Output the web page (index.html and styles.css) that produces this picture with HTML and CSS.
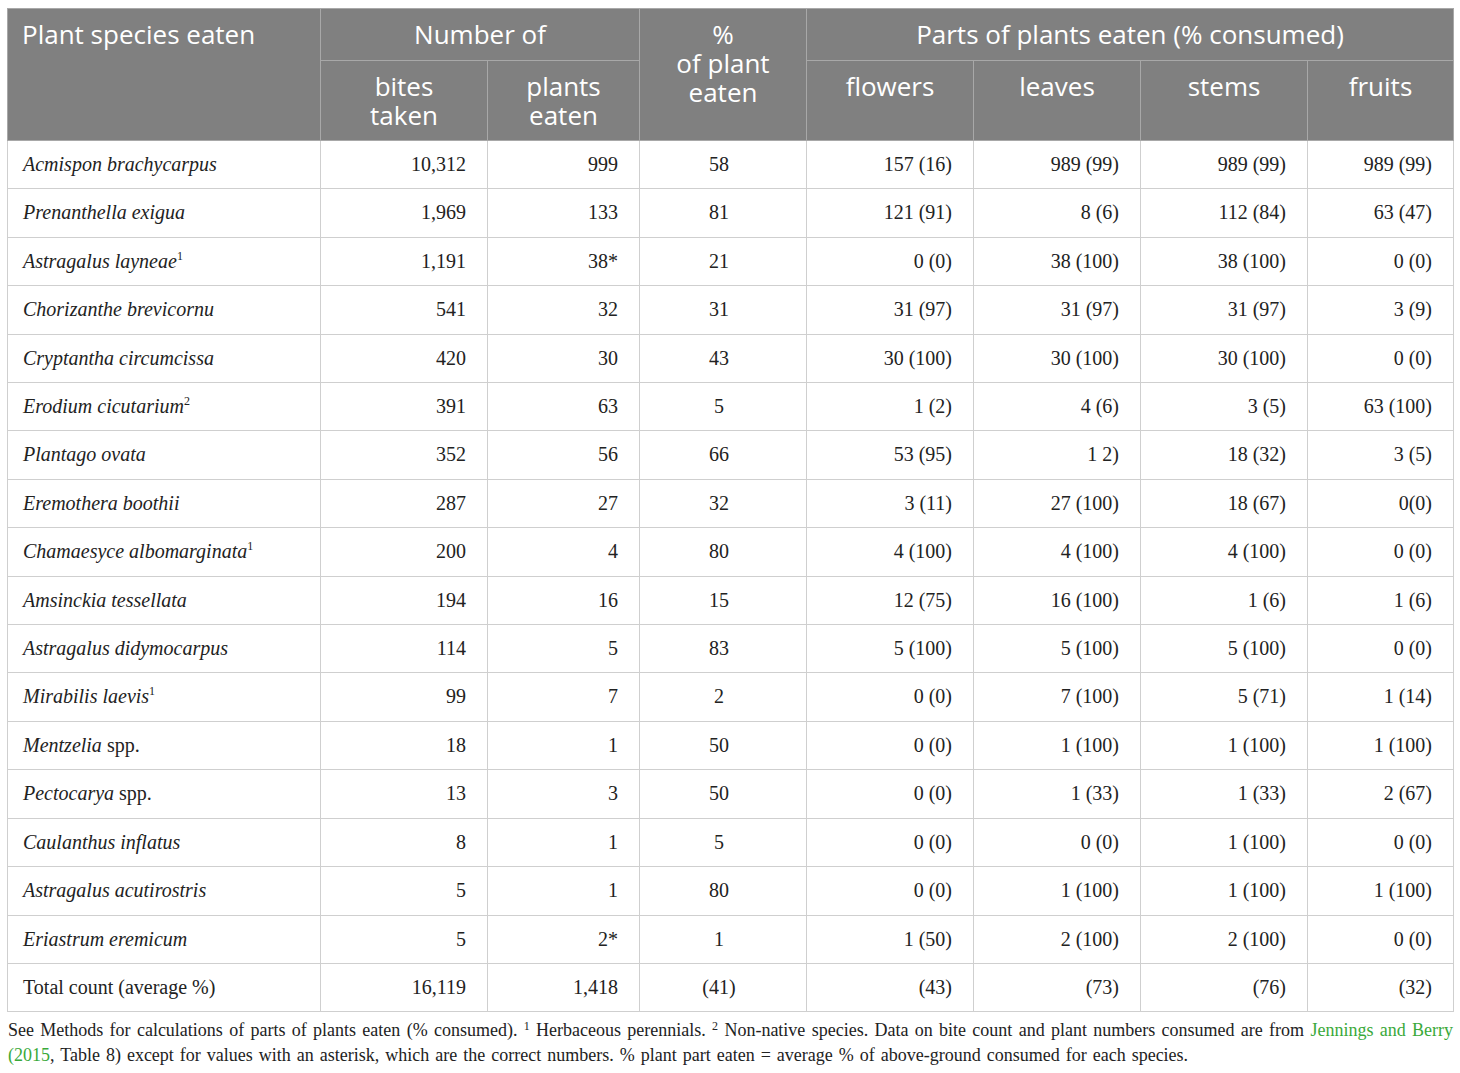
FILE: index.html
```html
<!DOCTYPE html>
<html lang="en">
<head>
    <meta charset="UTF-8">
    <meta name="viewport" content="width=device-width, initial-scale=1.0">
    <title>Plant species eaten</title>
    <link rel="stylesheet" href="styles.css">
</head>
<body>
    <div class="page">
        <table class="data-table">
            <colgroup>
                <col class="c-name">
                <col class="c-bites">
                <col class="c-plants">
                <col class="c-pct">
                <col class="c-part">
                <col class="c-part">
                <col class="c-part">
                <col class="c-fruit">
            </colgroup>
            <thead>
                <tr class="head-top">
                    <th rowspan="2" class="left">Plant species eaten</th>
                    <th colspan="2">Number of</th>
                    <th rowspan="2">%<br>of plant<br>eaten</th>
                    <th colspan="4">Parts of plants eaten (% consumed)</th>
                </tr>
                <tr class="head-sub">
                    <th>bites<br>taken</th>
                    <th>plants<br>eaten</th>
                    <th>flowers</th>
                    <th>leaves</th>
                    <th>stems</th>
                    <th>fruits</th>
                </tr>
            </thead>
            <tbody>
                <tr><td class="sp">Acmispon brachycarpus</td><td>10,312</td><td>999</td><td class="mid">58</td><td>157 (16)</td><td>989 (99)</td><td>989 (99)</td><td>989 (99)</td></tr>
                <tr><td class="sp">Prenanthella exigua</td><td>1,969</td><td>133</td><td class="mid">81</td><td>121 (91)</td><td>8 (6)</td><td>112 (84)</td><td>63 (47)</td></tr>
                <tr><td class="sp">Astragalus layneae<sup>1</sup></td><td>1,191</td><td>38*</td><td class="mid">21</td><td>0 (0)</td><td>38 (100)</td><td>38 (100)</td><td>0 (0)</td></tr>
                <tr><td class="sp">Chorizanthe brevicornu</td><td>541</td><td>32</td><td class="mid">31</td><td>31 (97)</td><td>31 (97)</td><td>31 (97)</td><td>3 (9)</td></tr>
                <tr><td class="sp">Cryptantha circumcissa</td><td>420</td><td>30</td><td class="mid">43</td><td>30 (100)</td><td>30 (100)</td><td>30 (100)</td><td>0 (0)</td></tr>
                <tr><td class="sp">Erodium cicutarium<sup>2</sup></td><td>391</td><td>63</td><td class="mid">5</td><td>1 (2)</td><td>4 (6)</td><td>3 (5)</td><td>63 (100)</td></tr>
                <tr><td class="sp">Plantago ovata</td><td>352</td><td>56</td><td class="mid">66</td><td>53 (95)</td><td>1 2)</td><td>18 (32)</td><td>3 (5)</td></tr>
                <tr><td class="sp">Eremothera boothii</td><td>287</td><td>27</td><td class="mid">32</td><td>3 (11)</td><td>27 (100)</td><td>18 (67)</td><td>0(0)</td></tr>
                <tr><td class="sp">Chamaesyce albomarginata<sup>1</sup></td><td>200</td><td>4</td><td class="mid">80</td><td>4 (100)</td><td>4 (100)</td><td>4 (100)</td><td>0 (0)</td></tr>
                <tr><td class="sp">Amsinckia tessellata</td><td>194</td><td>16</td><td class="mid">15</td><td>12 (75)</td><td>16 (100)</td><td>1 (6)</td><td>1 (6)</td></tr>
                <tr><td class="sp">Astragalus didymocarpus</td><td>114</td><td>5</td><td class="mid">83</td><td>5 (100)</td><td>5 (100)</td><td>5 (100)</td><td>0 (0)</td></tr>
                <tr><td class="sp">Mirabilis laevis<sup>1</sup></td><td>99</td><td>7</td><td class="mid">2</td><td>0 (0)</td><td>7 (100)</td><td>5 (71)</td><td>1 (14)</td></tr>
                <tr><td class="sp">Mentzelia <span class="up">spp.</span></td><td>18</td><td>1</td><td class="mid">50</td><td>0 (0)</td><td>1 (100)</td><td>1 (100)</td><td>1 (100)</td></tr>
                <tr><td class="sp">Pectocarya <span class="up">spp.</span></td><td>13</td><td>3</td><td class="mid">50</td><td>0 (0)</td><td>1 (33)</td><td>1 (33)</td><td>2 (67)</td></tr>
                <tr><td class="sp">Caulanthus inflatus</td><td>8</td><td>1</td><td class="mid">5</td><td>0 (0)</td><td>0 (0)</td><td>1 (100)</td><td>0 (0)</td></tr>
                <tr><td class="sp">Astragalus acutirostris</td><td>5</td><td>1</td><td class="mid">80</td><td>0 (0)</td><td>1 (100)</td><td>1 (100)</td><td>1 (100)</td></tr>
                <tr><td class="sp">Eriastrum eremicum</td><td>5</td><td>2*</td><td class="mid">1</td><td>1 (50)</td><td>2 (100)</td><td>2 (100)</td><td>0 (0)</td></tr>
                <tr><td class="name">Total count (average %)</td><td>16,119</td><td>1,418</td><td class="mid">(41)</td><td>(43)</td><td>(73)</td><td>(76)</td><td>(32)</td></tr>
            </tbody>
        </table>

        <p class="footnote">See Methods for calculations of parts of plants eaten (% consumed). <sup>1</sup> Herbaceous perennials. <sup>2</sup> Non-native species. Data on bite count and plant numbers consumed are from <a href="#">Jennings and Berry (2015</a>, Table 8) except for values with an asterisk, which are the correct numbers. % plant part eaten = average % of above-ground consumed for each species.</p>
    </div>
</body>
</html>
```

FILE: styles.css
```css
body {
    margin: 0;
    background-color: #fff;
    color: #222;
}
.page {
    padding: 8px 7px 0 7px;
}
.data-table {
    width: 1446px;
    table-layout: fixed;
    border-collapse: collapse;
}
.c-name { width: 313px; }
.c-bites { width: 167px; }
.c-plants { width: 152px; }
.c-pct { width: 167px; }
.c-part { width: 167px; }
.c-fruit { width: 146px; }

.data-table th {
    background-color: #808080;
    color: #fff;
    font-family: "Open Sans", "Noto Sans", sans-serif;
    font-weight: normal;
    font-size: 26px;
    line-height: 29px;
    text-align: center;
    vertical-align: top;
    padding: 11px 10px 11px 10px;
    border: 1px solid #a8a8a8;
}
.data-table th.left {
    text-align: left;
    padding-left: 14px;
}
.head-top th {
    height: 29px;
}
.head-sub th {
    height: 68px;
    padding-bottom: 0;
}
.data-table td {
    font-family: "Liberation Serif", "Times New Roman", serif;
    font-size: 20px;
    line-height: 23.4px;
    text-align: right;
    vertical-align: middle;
    padding: 12px 21px 12px 15px;
    border: 1px solid #cfcfcf;
    height: 23.4px;
}
.data-table td.sp {
    font-style: italic;
    text-align: left;
}
.data-table td.name {
    text-align: left;
}
.data-table td.mid {
    text-align: center;
    padding-left: 12px;
    padding-right: 20px;
}
.up {
    font-style: normal;
}
.data-table sup {
    font-size: 12px;
    font-style: normal;
    line-height: 0;
}
.footnote {
    margin: 6px 0 0 1px;
    font-family: "Liberation Serif", "Times New Roman", serif;
    font-size: 18px;
    line-height: 25px;
    word-spacing: 1.5px;
    text-align: justify;
    color: #222;
}
.footnote sup {
    font-size: 12px;
    line-height: 0;
    vertical-align: 6px;
}
.footnote a {
    color: #3aa93a;
    text-decoration: none;
}
```
